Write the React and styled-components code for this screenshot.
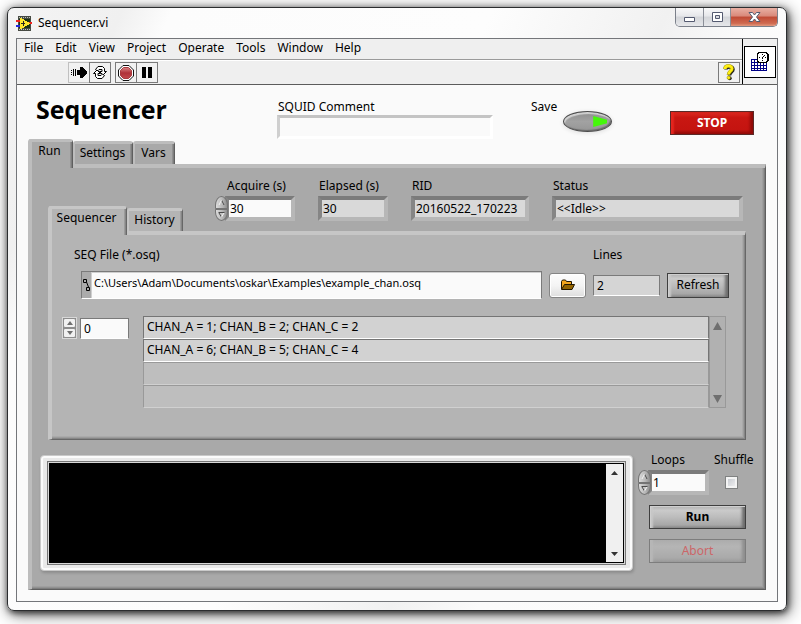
import React, { useState } from "react";
import styled, { createGlobalStyle, css } from "styled-components";

const GlobalStyle = createGlobalStyle`
  * { box-sizing: border-box; }
  body { margin: 0; background: #fff; overflow: hidden; }
  body, button, input, textarea {
    font-family: "Noto Sans", "Open Sans", sans-serif;
    font-size: 12px;
    line-height: 16px;
    color: #000;
  }
  button { padding: 0; }
`;

const Page = styled.div`
  padding: 7px 14px 13px 7px;
`;

const WindowFrame = styled.div`
  border: 1px solid #2b2d2f;
  border-radius: 7px;
  padding: 0 8px 8px;
  background: linear-gradient(115deg, #f4f4f4 0, #f0f0f0 105px, #fcfcfc 150px, #fdfdfd 440px, #f1f1f1 600px, #fbfbfb 680px, #fdfdfd 100%);
  box-shadow: 1px 2px 6px rgba(0, 0, 0, 0.65), 2px 3px 16px rgba(0, 0, 0, 0.65);
`;

const TitleBar = styled.header`
  display: flex;
  align-items: flex-start;
  height: 30px;
`;

const WindowTitle = styled.div`
  display: flex;
  flex: 1;
  align-items: center;
  gap: 6px;
  height: 30px;
`;

const CaptionButtons = styled.div`
  display: flex;
  height: 19px;
  border: 1px solid #7b808a;
  border-top: 0;
  border-radius: 0 0 5px 5px;
  overflow: hidden;
`;

const CaptionButton = styled.button`
  display: grid;
  place-items: center;
  width: ${(p) => (p.$close ? 47 : 27)}px;
  border: 0;
  border-left: ${(p) => (p.$first ? "0" : "1px solid #8b8f98")};
  background: ${(p) =>
    p.$close
      ? "linear-gradient(#e9b0a4 0, #d9897a 45%, #c04a35 50%, #cf6a50 85%, #e39a80 100%)"
      : "linear-gradient(#f8f8f9 0, #e6e7ea 45%, #d3d5d9 50%, #e6e7ea 100%)"};
`;

const Client = styled.div`
  border: 1px solid #74767a;
  background: #fafafa;
`;

const TopBars = styled.div`
  display: grid;
  grid-template-columns: 1fr 35px;
  border-bottom: 1px solid #5c5c5c;
  background: #efefef;
`;

const MenuBar = styled.nav`
  display: flex;
  height: 21px;
  padding-left: 7px;
  gap: 12px;
  border-bottom: 1px solid #9a9a9a;
`;

const MenuItem = styled.button`
  border: 0;
  background: none;
  height: 18px;
`;

const Toolbar = styled.div`
  display: flex;
  align-items: center;
  height: 24px;
  padding: 0 2px 0 51px;
  border-top: 1px solid #fff;
`;

const ToolGroup = styled.div`
  display: flex;
  margin-right: 4px;
  &:last-child { margin: 0 0 0 auto; }
`;

const ToolButton = styled.button`
  display: grid;
  place-items: center;
  width: 22px;
  height: 21px;
  border: 1px solid ${(p) => (p.$soft ? "#c0c0c0" : "#7a7a7a")};
  background: #f1f1f1;
  & + & { margin-left: -1px; }
`;

const ViIconCell = styled.div`
  display: grid;
  place-items: center;
  border-left: 1px solid #000;
`;

const ViIcon = styled.div`
  display: grid;
  place-items: center;
  width: 32px;
  height: 32px;
  border: 1px solid #000;
  background: #fff;
`;

const Header = styled.section`
  display: grid;
  grid-template-columns: 241px 254px 1fr 84px;
  height: 54px;
  padding: 0 23px 0 19px;
`;

const Heading = styled.h1`
  margin: 7px 0 0;
  font-family: "Open Sans", "Noto Sans", sans-serif;
  font-size: 25px;
  line-height: 34px;
  font-weight: 700;
`;

const Label = styled.label`
  display: block;
  height: 16px;
  white-space: nowrap;
`;

const Comment = styled.div`
  width: 216px;
  padding: 14px 0 0;
  ${Label} { padding-left: 1px; }
`;

const bevels = {
  pale: "#c4c4c4 #fff #fff #cfcfcf",
  grey: "#7b7b7b #b7b7b7 #b7b7b7 #858585",
};

const BevelInput = styled.input`
  display: block;
  width: 100%;
  height: ${(p) => (p.$pale ? 24 : 25)}px;
  border: ${(p) => (p.$pale ? 3 : 4)}px solid;
  border-color: ${(p) => (p.$pale ? bevels.pale : bevels.grey)};
  padding: 0 1px;
  outline: 0;
  background: ${(p) => (p.readOnly ? "#d9d9d9" : "#fafafa")};
`;

const SaveGroup = styled.div`
  display: flex;
  gap: 6px;
  padding-top: 14px;
`;

const Toggle = styled.input`
  appearance: none;
  display: flex;
  align-items: center;
  justify-content: flex-end;
  width: 49px;
  height: 21px;
  margin: 12px 0 0;
  padding-right: 4px;
  border: 1px solid #4a4a4a;
  border-radius: 50%;
  background: linear-gradient(#8c8c8c, #a2a2a2 50%, #969696);
  box-shadow: inset 1px 2px 1px #d2d2d2, inset -1px -1px 1px #6a6a6a, 0 1px 4px #ddd;
  &::after {
    content: "";
    width: 14px;
    height: 11px;
    background: ${(p) => (p.checked ? "#45f70a" : "#4b6a40")};
    clip-path: polygon(0 0, 100% 35%, 100% 65%, 0 100%);
  }
`;

const StopButton = styled.button`
  height: 24px;
  margin-top: 26px;
  border: 1px solid #5a2a28;
  color: #fff;
  font-weight: 700;
  background: linear-gradient(#e02a22, #c91712 25%, #c41410 80%, #8d0a08);
  box-shadow: inset 4px 0 2px -1px #e5251e, inset -4px 0 3px -1px #8d0b08;
`;

const MainTabs = styled.section`
  padding: 0 11px 11px;
`;

const TabList = styled.div`
  display: flex;
  align-items: flex-end;
`;

const tones = {
  outer: { fill: "#a9a9a9", light: "#bdbdbd", soft: "#9f9f9f", mid: "#919191", dark: "#7d7d7d", edge: "#5f5f5f" },
  inner: { fill: "#b4b4b4", light: "#c6c6c6", soft: "#aaaaaa", mid: "#9b9b9b", dark: "#868686", edge: "#676767" },
};

const Tab = styled.button`
  position: relative;
  width: ${(p) => p.$width}px;
  height: ${(p) => (p.$active ? 29 : 23)}px;
  margin-bottom: ${(p) => (p.$active ? -4 : 0)}px;
  padding-bottom: ${(p) => (p.$active ? 8 : 2)}px;
  padding-right: ${(p) => (p.$active ? 5 : 2)}px;
  border: 0 solid;
  border-width: 3px 1px 0 ${(p) => (p.$active ? 4 : 2)}px;
  border-color: ${(p) => `${tones[p.$tone].light} ${tones[p.$tone].edge} ${tones[p.$tone].fill} ${tones[p.$tone].light}`};
  border-radius: 3px 3px 0 0;
  background: ${(p) => tones[p.$tone].fill};
  box-shadow: inset -1px 0 0 ${(p) => tones[p.$tone].dark}, inset -2px 0 0 ${(p) => tones[p.$tone].mid};
  white-space: nowrap;
`;

const Panel = styled.div`
  border: 1px solid;
  border-width: 4px 1px 1px 4px;
  border-color: ${(p) => `${tones[p.$tone].light} ${tones[p.$tone].edge} ${tones[p.$tone].edge} ${tones[p.$tone].light}`};
  padding: 0 3px 3px 0;
  background: ${(p) => tones[p.$tone].fill};
  box-shadow: inset -1px -1px 0 ${(p) => tones[p.$tone].dark}, inset -2px -2px 0 ${(p) => tones[p.$tone].mid},
    inset -3px -3px 0 ${(p) => tones[p.$tone].soft};
`;

const StatusRow = styled.div`
  display: flex;
  align-items: flex-end;
  gap: 32px;
  padding: 0 19px 0 16px;
`;

const Fields = styled.div`
  display: grid;
  grid-template-columns: 80px 70px 118px 1fr;
  gap: 23px;
  flex: 1;
  padding: 10px 0;
`;

const Field = styled.div`
  display: grid;
  gap: 2px;
  ${Label} { padding-left: ${(p) => (p.$numeric ? 12 : 1)}px; }
`;

const NumericBox = styled.div`
  display: grid;
  grid-template-columns: 10px 1fr;
  align-items: center;
`;

const RoundSpinner = styled.div`
  display: grid;
  position: relative;
  width: 13px;
  height: 25px;
`;

const RoundButton = styled.button`
  display: grid;
  place-items: center;
  border: 1px solid #747474;
  border-radius: ${(p) => (p.$down ? "1px 1px 7px 7px / 1px 1px 10px 10px" : "7px 7px 1px 1px / 10px 10px 1px 1px")};
  background: linear-gradient(90deg, #dcdcdc, #b5b5b5 60%, #8e8e8e);
`;

const InnerPanel = styled(Panel)`
  margin: 0 16px;
  padding: 12px 3px 31px 0;
`;

const FileGrid = styled.div`
  display: grid;
  grid-template-columns: 1fr 37px 67px 62px;
  grid-template-rows: 16px 28px;
  gap: 8px 7px;
  align-items: center;
  padding: 0 13px 0 22px;
  ${Label}:nth-of-type(2) { grid-column: 3 / 5; }
`;

const PathBox = styled.div`
  display: flex;
  height: 28px;
  margin-left: 7px;
  border: 1px solid #7a7a7a;
  border-bottom-color: #fff;
  background: #ababab;
`;

const PathMark = styled.div`
  display: grid;
  place-items: center;
  width: 9px;
`;

const PathInput = styled.input`
  flex: 1;
  min-width: 0;
  border: 1px solid #cfcfcf;
  border-width: 1px 0 0 1px;
  padding: 0 2px 6px;
  outline: 0;
  font-size: 11px;
  background: #fafafa;
`;

const BrowseButton = styled.button`
  display: grid;
  place-items: center;
  height: 25px;
  border: 1px solid #858585;
  border-radius: 3px;
  background: linear-gradient(#fdfdfd, #f4f4f4 50%, #dedede);
  box-shadow: inset 0 0 0 1px #fff;
`;

const FlatInput = styled.input`
  width: ${(p) => p.$width || "100%"};
  height: 21px;
  border: 1px solid #7a7a7a;
  border-bottom-color: #fff;
  padding: 0 3px;
  outline: 0;
  background: ${(p) => (p.readOnly ? "#d5d5d5" : "#fafafa")};
`;

const MetalButton = styled.button`
  height: ${(p) => p.$height || 24}px;
  border: 1px solid #3f3f3f;
  background: linear-gradient(#b0b0b0, #cacaca 20%, #bcbcbc 50%, #a8a8a8 85%, #8a8a8a);
  box-shadow: inset 1px 1px 0 #cfcfcf, inset 5px 0 2px -2px #c8c8c8, inset -5px -1px 3px -2px #6c6c6c;
  font-weight: ${(p) => (p.$bold ? 700 : 400)};
  ${(p) =>
    p.disabled &&
    css`
      color: #cc6668;
      border-color: #7d7d7d;
      background: linear-gradient(#acacac, #b5b5b5 30%, #aaaaaa 80%, #9b9b9b);
      box-shadow: inset 5px 0 2px -2px #b7b7b7, inset -5px -1px 3px -2px #8f8f8f;
    `}
`;

const ListRow = styled.div`
  display: flex;
  align-items: flex-start;
  margin-top: 17px;
  padding: 0 16px 0 10px;
`;

const IndexBox = styled.div`
  display: flex;
  align-items: center;
  gap: 3px;
  margin: 1px 14px 0 0;
`;

const SquareSpinner = styled.div`
  display: grid;
  width: 15px;
  height: 22px;
  border: 1px solid #d8d8d8;
  background: #8b8b8b;
`;

const SquareButton = styled.button`
  display: grid;
  place-items: center;
  height: 10px;
  border: 1px solid #8d8d8d;
  border-radius: 2px;
  background: #f1f1f1;
`;

const Rows = styled.ul`
  flex: 1;
  margin: 0;
  padding: 0;
  list-style: none;
`;

const Row = styled.li`
  height: 23px;
  padding: 2px 3px;
  border: 1px solid ${(p) => (p.$empty ? "#999" : "#757575")};
  border-bottom-color: ${(p) => (p.$empty ? "#d0d0d0" : "#fff")};
  background: ${(p) => (p.$empty ? "#bebebe" : "#d2d2d2")};
`;

const ListScroll = styled.div`
  display: flex;
  flex-direction: column;
  justify-content: space-between;
  align-self: stretch;
  width: 17px;
  border: 1px solid #999;
  background: #b1b1b1;
`;

const ScrollButton = styled.button`
  display: grid;
  place-items: center;
  height: 17px;
  border: 0;
  background: none;
`;

const BottomRow = styled.div`
  display: grid;
  grid-template-columns: 1fr 113px;
  gap: 5px;
  padding: 12px 11px 15px 8px;
`;

const LogFrame = styled.div`
  display: flex;
  height: 116px;
  margin-top: 3px;
  padding: 5px 6px 5px;
  border: 1px solid #c9c9c9;
  border-radius: 4px;
  background: #e9e9e9;
  box-shadow: inset 0 0 0 2px #fbfbfb, 1px 2px 3px #8c8c8c;
`;

const LogBox = styled.div`
  display: flex;
  flex: 1;
  border: 1px solid #777;
  padding: 1px;
  background: #d8d8d8;
`;

const LogText = styled.textarea`
  flex: 1;
  min-width: 0;
  height: 100%;
  border: 0;
  padding: 2px 4px;
  resize: none;
  outline: 0;
  color: #fff;
  background: #000;
`;

const LogScroll = styled.div`
  display: flex;
  flex-direction: column;
  justify-content: space-between;
  width: 18px;
  border: 1px solid #000;
  border-left: 0;
  background: #f0f0f0;
`;

const Controls = styled.div`
  display: flex;
  flex-direction: column;
  gap: 10px;
`;

const LoopRow = styled.div`
  display: grid;
  grid-template-columns: 71px 1fr;
  gap: 5px;
  ${Label} { padding-left: 13px; }
`;

const CheckField = styled.div`
  display: grid;
  grid-template-rows: 16px 1fr;
  gap: 2px;
  align-items: center;
  ${Label} { padding: 0; }
`;

const CheckBox = styled.input`
  appearance: none;
  width: 13px;
  height: 13px;
  margin: 0 0 0 11px;
  border: 1px solid #808282;
  background: linear-gradient(135deg, #bfc3ca, #f6f6f6);
  box-shadow: inset 0 0 0 2px #f4f4f4;
`;

const ActionStack = styled.div`
  display: grid;
  gap: 10px;
  padding: 0 5px 0 11px;
`;

function Triangle({ down, w = 9, h = 8, color = "#6f6f6f" }) {
  return (
    <svg width={w} height={h} viewBox="0 0 10 8" preserveAspectRatio="none" aria-hidden="true">
      <path d={down ? "M0 0h10L5 8z" : "M5 0l5 8H0z"} fill={color} />
    </svg>
  );
}

function SpinGlyph({ down }) {
  return (
    <svg width="7" height="7" viewBox="0 0 7 7" aria-hidden="true">
      <path d={down ? "M1 1.500h5L3.500 6z" : "M3.500 1L6 5.500H1z"} fill="#c4c4c4" />
      <path d={down ? "M.5 1.500h6M1 2l2.500 4" : "M3.500 1L6 6"} fill="none" stroke="#4a4a4a" />
      <path d={down ? "M3.500 6L6 2" : "M1 6l2.500-5"} stroke="#f5f5f5" />
    </svg>
  );
}

function AppIcon() {
  return (
    <svg width="16" height="15" viewBox="0 0 16 15" shapeRendering="crispEdges" aria-hidden="true">
      <path d="M2 0h13v15H2z" fill="#474b43" />
      <path d="M3 1h11M3 13.500h11" stroke="#bfc4bb" strokeDasharray="1 1" />
      <path d="M3 3h11v9H3z" fill="#1b3113" />
      <path d="M0 5h5M12 6.500h4" stroke="#f0221c" strokeWidth="2" />
      <path d="M0 10h5" stroke="#2028e0" strokeWidth="2" />
      <path d="M4 2h1l9 5v1l-9 5H4z" fill="#ffe72d" />
      <path d="M5 7.500h4M7 5v5" stroke="#222" />
    </svg>
  );
}

function RunIcon() {
  return (
    <svg width="16" height="13" viewBox="0 0 16 13" shapeRendering="crispEdges" aria-hidden="true">
      <path d="M.5 4v6M2.500 3v8M4.500 3v8" stroke="#000" strokeDasharray="1 1" />
      <path d="M2 4h1v5H2zM4 4h1v5H4zM6 4h3V1h2l4 4 1 1v1l-1 1-4 4H9V9H6z" />
    </svg>
  );
}

function ContinuousIcon() {
  return (
    <svg width="16" height="15" viewBox="0 0 16 15" fill="#fff" stroke="#000" aria-hidden="true">
      <path d="M3.500 4.500L6 1.500h4.500l2 2v3h2l-3.500 3.500-3.500-3.500h2.500V4.500H7L5.500 6z" />
      <path d="M12.500 10.500L10 13.500H5.500l-2-2v-3h-2L5 5l3.500 3.500H6v2h3L10.500 9z" />
    </svg>
  );
}

function AbortIcon() {
  return (
    <svg width="16" height="16" viewBox="0 0 16 16" aria-hidden="true">
      <defs>
        <linearGradient id="abortFill" x2="0" y2="1">
          <stop stopColor="#d98484" />
          <stop offset=".5" stopColor="#b03238" />
          <stop offset="1" stopColor="#c0494c" />
        </linearGradient>
      </defs>
      <path d="M5 .5h6L15.500 5v6L11 15.500H5L.5 11V5z" fill="#fff" stroke="#111" />
      <path d="M5.500 2.500h5l3 3v5l-3 3h-5l-3-3v-5z" fill="url(#abortFill)" stroke="#a83a3e" />
    </svg>
  );
}

function PauseIcon() {
  return (
    <svg width="10" height="11" viewBox="0 0 10 11" aria-hidden="true">
      <path d="M0 0h4v11H0zM6 0h4v11H6z" />
    </svg>
  );
}

function HelpIcon() {
  return (
    <svg width="13" height="17" viewBox="0 0 13 17" aria-hidden="true">
      <path d="M3 5.500C3 2 10 2 10 5.500 10 8 6.500 8 6.500 11.500" fill="none" stroke="#222" strokeWidth="3.500" />
      <circle cx="6.700" cy="14.200" r="2" fill="#222" />
      <path d="M2 5C2 1 9 1 9 4.500 9 7.200 5.500 7.500 5.500 10.800" fill="none" stroke="#8c8400" strokeWidth="3.600" />
      <path d="M2 5C2 1 9 1 9 4.500 9 7.200 5.500 7.500 5.500 10.500" fill="none" stroke="#ffee12" strokeWidth="2.700" />
      <circle cx="5.700" cy="13.700" r="1.700" fill="#ffee12" stroke="#8c8400" strokeWidth=".5" />
    </svg>
  );
}

function CalendarClockIcon() {
  return (
    <svg width="20" height="22" viewBox="0 0 20 22" shapeRendering="crispEdges" aria-hidden="true">
      <path d="M1 8h16v12H1z" fill="#000087" />
      <path d="M2 10h5M2 13h15M2 16h15M2 19h15" stroke="#fff" strokeWidth="2" strokeDasharray="2 1" />
      <path d="M16 8h1v12H1v-1h15z" fill="#000087" />
      <path d="M8 1h9v1h1v1h1v7h-1v1h-1v1H8v-1H7V2h1z" />
      <path d="M9 2h7v1h1v7h-1v1H9v-1H8V3h1z" fill="#fff" />
      <path d="M12 3h1v1h-1zM12 9h1v1h-1zM9 6h1v1H9zM15 6h1v1h-1zM12 6h1v2h-1zM13 5h1v1h-1zM14 4h1v1h-1z" />
    </svg>
  );
}

function FolderIcon() {
  return (
    <svg width="16" height="12" viewBox="0 0 16 12" aria-hidden="true">
      <path d="M1.500 10V2.500L2.500 1h3l1 1.500h5V5" fill="#f2a51c" stroke="#211600" />
      <path d="M1.500 10.500l3-5h10l-2.500 5z" fill="#936400" stroke="#211600" />
    </svg>
  );
}

function PathIcon() {
  return (
    <svg width="8" height="14" viewBox="0 0 8 14" fill="#ababab" stroke="#000" aria-hidden="true">
      <path d="M3.500 4l2 5" fill="none" />
      <path d="M.5 1.500h3v3h-3zM3.500 9.500h3v3h-3z" />
    </svg>
  );
}

function MinimizeIcon() {
  return (
    <svg width="13" height="12" viewBox="0 0 13 12" aria-hidden="true">
      <path d="M1.500 6.500h10v4h-10z" fill="#fff" stroke="#545a70" />
    </svg>
  );
}

function MaximizeIcon() {
  return (
    <svg width="13" height="12" viewBox="0 0 13 12" aria-hidden="true">
      <path d="M1.500 1.500h10v9h-10z" fill="#fff" stroke="#545a70" />
      <path d="M4.500 4.500h4v3h-4z" fill="#d7d9de" stroke="#545a70" />
    </svg>
  );
}

function CloseIcon() {
  return (
    <svg width="13" height="12" viewBox="0 0 13 12" aria-hidden="true">
      <path d="M1 1.500h3.500l2 2.500 2-2.500H12L8.500 6l3.500 4.500H8.500l-2-2.500-2 2.500H1L4.500 6z" fill="#fff" stroke="#545a70" />
    </svg>
  );
}

function Numeric({ id, value, onChange }) {
  const step = (n) => onChange(String((Number(value) || 0) + n));
  return (
    <NumericBox>
      <RoundSpinner>
        <RoundButton aria-label="Increase" onClick={() => step(1)}><SpinGlyph /></RoundButton>
        <RoundButton $down aria-label="Decrease" onClick={() => step(-1)}><SpinGlyph down /></RoundButton>
      </RoundSpinner>
      <BevelInput id={id} inputMode="numeric" value={value} onChange={(e) => onChange(e.target.value)} />
    </NumericBox>
  );
}

function Indicator({ id, label, value }) {
  return (
    <Field>
      <Label htmlFor={id}>{label}</Label>
      <BevelInput id={id} readOnly value={value} />
    </Field>
  );
}

const menus = ["File", "Edit", "View", "Project", "Operate", "Tools", "Window", "Help"];
const mainTabs = [["Run", 45], ["Settings", 60], ["Vars", 42]];
const innerTabs = [["Sequencer", 79], ["History", 56]];
const lines = ["CHAN_A = 1; CHAN_B = 2; CHAN_C = 2", "CHAN_A = 6; CHAN_B = 5; CHAN_C = 4", "", ""];

function Tabs({ items, tone }) {
  return (
    <TabList role="tablist">
      {items.map(([name, width], i) => (
        <Tab key={name} role="tab" aria-selected={i === 0} $active={i === 0} $width={width} $tone={tone}>
          {name}
        </Tab>
      ))}
    </TabList>
  );
}

export default function App() {
  const [acquire, setAcquire] = useState("30");
  const [loops, setLoops] = useState("1");
  const [index, setIndex] = useState("0");
  const [save, setSave] = useState(true);
  const [comment, setComment] = useState("");
  const [path, setPath] = useState("C:\\Users\\Adam\\Documents\\oskar\\Examples\\example_chan.osq");
  const stepIndex = (n) => setIndex(String(Math.max(0, Number(index) + n)));

  return (
    <Page>
      <GlobalStyle />
      <WindowFrame>
        <TitleBar>
          <WindowTitle><AppIcon />Sequencer.vi</WindowTitle>
          <CaptionButtons>
            <CaptionButton $first aria-label="Minimize"><MinimizeIcon /></CaptionButton>
            <CaptionButton aria-label="Maximize"><MaximizeIcon /></CaptionButton>
            <CaptionButton $close aria-label="Close"><CloseIcon /></CaptionButton>
          </CaptionButtons>
        </TitleBar>
        <Client>
          <TopBars>
            <div>
              <MenuBar>{menus.map((m) => <MenuItem key={m}>{m}</MenuItem>)}</MenuBar>
              <Toolbar>
                <ToolGroup>
                  <ToolButton $soft aria-label="Run"><RunIcon /></ToolButton>
                  <ToolButton aria-label="Run continuously"><ContinuousIcon /></ToolButton>
                </ToolGroup>
                <ToolGroup>
                  <ToolButton aria-label="Abort execution"><AbortIcon /></ToolButton>
                  <ToolButton aria-label="Pause"><PauseIcon /></ToolButton>
                </ToolGroup>
                <ToolGroup>
                  <ToolButton aria-label="Help"><HelpIcon /></ToolButton>
                </ToolGroup>
              </Toolbar>
            </div>
            <ViIconCell><ViIcon><CalendarClockIcon /></ViIcon></ViIconCell>
          </TopBars>

          <Header>
            <Heading>Sequencer</Heading>
            <Comment>
              <Label htmlFor="comment">SQUID Comment</Label>
              <BevelInput $pale id="comment" value={comment} onChange={(e) => setComment(e.target.value)} />
            </Comment>
            <SaveGroup>
              <Label htmlFor="save">Save</Label>
              <Toggle type="checkbox" id="save" checked={save} onChange={(e) => setSave(e.target.checked)} />
            </SaveGroup>
            <StopButton>STOP</StopButton>
          </Header>

          <MainTabs>
            <Tabs items={mainTabs} tone="outer" />
            <Panel $tone="outer">
              <StatusRow>
                <Tabs items={innerTabs} tone="inner" />
                <Fields>
                  <Field $numeric>
                    <Label htmlFor="acquire">Acquire (s)</Label>
                    <Numeric id="acquire" value={acquire} onChange={setAcquire} />
                  </Field>
                  <Indicator id="elapsed" label="Elapsed (s)" value="30" />
                  <Indicator id="rid" label="RID" value="20160522_170223" />
                  <Indicator id="status" label="Status" value="<<Idle>>" />
                </Fields>
              </StatusRow>

              <InnerPanel $tone="inner">
                <FileGrid>
                  <Label htmlFor="path">SEQ File (*.osq)</Label>
                  <Label htmlFor="lines">Lines</Label>
                  <PathBox>
                    <PathMark><PathIcon /></PathMark>
                    <PathInput id="path" value={path} onChange={(e) => setPath(e.target.value)} />
                  </PathBox>
                  <BrowseButton aria-label="Browse"><FolderIcon /></BrowseButton>
                  <FlatInput id="lines" readOnly value="2" />
                  <MetalButton $height={25}>Refresh</MetalButton>
                </FileGrid>
                <ListRow>
                  <IndexBox>
                    <SquareSpinner>
                      <SquareButton aria-label="Next line" onClick={() => stepIndex(1)}><Triangle w={6} h={4} /></SquareButton>
                      <SquareButton aria-label="Previous line" onClick={() => stepIndex(-1)}><Triangle down w={6} h={4} /></SquareButton>
                    </SquareSpinner>
                    <FlatInput $width="49px" aria-label="Line index" value={index} onChange={(e) => setIndex(e.target.value)} />
                  </IndexBox>
                  <Rows>
                    {lines.map((line, i) => <Row key={i} $empty={!line}>{line}</Row>)}
                  </Rows>
                  <ListScroll>
                    <ScrollButton aria-label="Scroll up"><Triangle /></ScrollButton>
                    <ScrollButton aria-label="Scroll down"><Triangle down /></ScrollButton>
                  </ListScroll>
                </ListRow>
              </InnerPanel>

              <BottomRow>
                <LogFrame>
                  <LogBox>
                    <LogText aria-label="Log" readOnly value="" />
                    <LogScroll>
                      <ScrollButton aria-label="Scroll log up"><Triangle w={7} h={4} color="#333" /></ScrollButton>
                      <ScrollButton aria-label="Scroll log down"><Triangle down w={7} h={4} color="#333" /></ScrollButton>
                    </LogScroll>
                  </LogBox>
                </LogFrame>
                <Controls>
                  <LoopRow>
                    <Field>
                      <Label htmlFor="loops">Loops</Label>
                      <Numeric id="loops" value={loops} onChange={setLoops} />
                    </Field>
                    <CheckField>
                      <Label htmlFor="shuffle">Shuffle</Label>
                      <CheckBox type="checkbox" id="shuffle" />
                    </CheckField>
                  </LoopRow>
                  <ActionStack>
                    <MetalButton $bold>Run</MetalButton>
                    <MetalButton disabled>Abort</MetalButton>
                  </ActionStack>
                </Controls>
              </BottomRow>
            </Panel>
          </MainTabs>
        </Client>
      </WindowFrame>
    </Page>
  );
}
